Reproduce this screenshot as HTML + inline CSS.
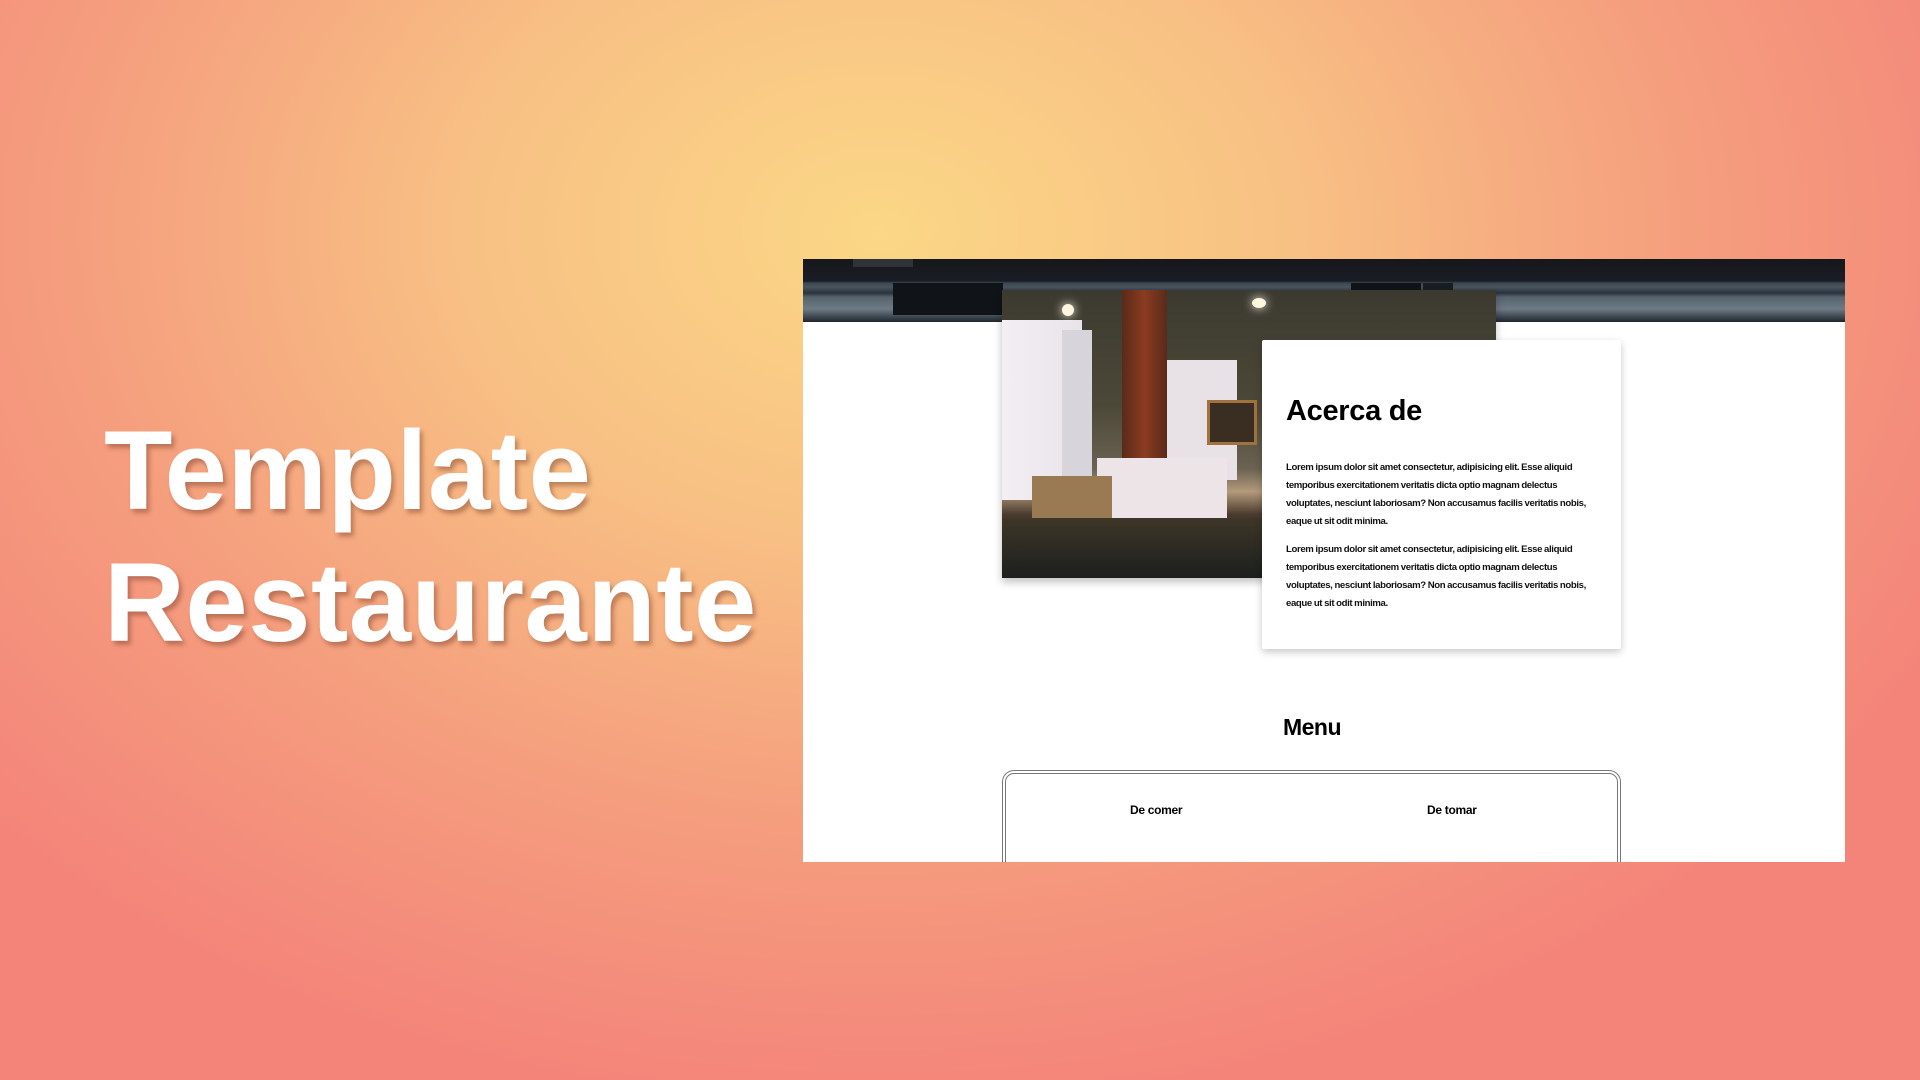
<!DOCTYPE html>
<html><head><meta charset="utf-8"><style>
*{margin:0;padding:0;box-sizing:border-box}
html,body{width:1920px;height:1080px;overflow:hidden}
body{position:relative;font-family:"Liberation Sans",sans-serif;
background:radial-gradient(ellipse 1200px 880px at 880px 230px,#fbd786 0%,#f8c084 35%,#f5a07e 65%,#f4847a 100%);}
.title{position:absolute;left:104px;top:405px;color:#fff;font-weight:bold;font-size:112px;line-height:132px;
text-shadow:3px 4px 5px rgba(120,60,40,.45);letter-spacing:0.5px}
.panel{position:absolute;left:803px;top:259px;width:1042px;height:603px;background:#fff;overflow:hidden}
.hdr{position:absolute;left:0;top:0;width:100%;height:63px;
background:linear-gradient(180deg,#15171c 0,#1a1d24 22px,#3a4650 24px,#4a5560 28px,#2a333b 34px,#56626c 38px,#6e7a84 50px,#3c4650 58px,#20252b 63px)}
.hdr i{position:absolute;background:#111418}
.photo{position:absolute;left:199px;top:31px;width:494px;height:288px;box-shadow:0 4px 8px rgba(0,0,0,.25);overflow:hidden;
background:linear-gradient(180deg,#3c3a30 0,#4c4838 40%,#6a6252 62%,#b39a7a 70%,#4a3a2e 78%,#1c1e1c 100%)}
.photo div{position:absolute}
.card{position:absolute;left:459px;top:81px;width:359px;height:309px;background:#fff;box-shadow:0 3px 8px rgba(0,0,0,.22);padding:0 24px;border-radius:2px}
.card h2{font-size:29px;font-weight:900;margin-top:54px;line-height:34px;letter-spacing:-.3px;color:#000}
.card p{font-size:9.6px;font-weight:bold;line-height:18px;color:#111;margin-top:0;letter-spacing:-0.38px;word-spacing:-0.3px;padding-right:4px}
.card p.a{margin-top:31px}
.card p.b{margin-top:10px}
.menu{position:absolute;left:-12px;width:100%;top:455px;text-align:center;font-size:23px;font-weight:900;letter-spacing:-.5px}
.box{position:absolute;left:199px;top:511px;width:619px;height:120px;border:4px double #777;border-radius:12px}
.box span{position:absolute;top:29px;font-size:12px;font-weight:bold;letter-spacing:-0.3px}
</style></head><body>
<div class="title">Template<br>Restaurante</div>
<div class="panel">
 <div class="hdr"><i style="left:50px;top:0;width:60px;height:8px;background:#2e3338"></i><i style="left:90px;top:24px;width:110px;height:32px;background:#101317"></i><i style="left:548px;top:24px;width:70px;height:34px;background:#101317"></i><i style="left:620px;top:24px;width:30px;height:34px;background:#1a1e22"></i></div>
 <div class="photo">
  <div style="left:0;top:30px;width:80px;height:180px;background:linear-gradient(90deg,#f3eef3,#e8e4ea)"></div>
  <div style="left:60px;top:40px;width:30px;height:175px;background:#d8d4dc"></div>
  <div style="left:120px;top:0;width:45px;height:180px;background:linear-gradient(90deg,#5a2a18,#8a3c22,#5a2a1a)"></div>
  <div style="left:165px;top:70px;width:70px;height:120px;background:#e8e2e6"></div>
  <div style="left:205px;top:110px;width:50px;height:45px;background:#3a2e22;border:3px solid #a0723e"></div>
  <div style="left:95px;top:168px;width:130px;height:60px;background:#ece4e6"></div>
  <div style="left:30px;top:186px;width:80px;height:46px;background:#9a7a52"></div>
  <div style="left:0;top:228px;width:494px;height:60px;background:linear-gradient(180deg,#3e3628,#1c1f1d)"></div>
  <div style="left:60px;top:14px;width:12px;height:12px;border-radius:50%;background:#fff6e0;box-shadow:0 0 10px #ffe"></div>
  <div style="left:250px;top:8px;width:14px;height:10px;border-radius:50%;background:#fff6e0;box-shadow:0 0 10px #ffe"></div>
 </div>
 <div class="card">
  <h2>Acerca de</h2>
  <p class="a">Lorem ipsum dolor sit amet consectetur, adipisicing elit. Esse aliquid temporibus exercitationem veritatis dicta optio magnam delectus voluptates, nesciunt laboriosam? Non accusamus facilis veritatis nobis, eaque ut sit odit minima.</p>
  <p class="b">Lorem ipsum dolor sit amet consectetur, adipisicing elit. Esse aliquid temporibus exercitationem veritatis dicta optio magnam delectus voluptates, nesciunt laboriosam? Non accusamus facilis veritatis nobis, eaque ut sit odit minima.</p>
 </div>
 <div class="menu">Menu</div>
 <div class="box"><span style="left:124px">De comer</span><span style="left:421px">De tomar</span></div>
</div>
</body></html>
